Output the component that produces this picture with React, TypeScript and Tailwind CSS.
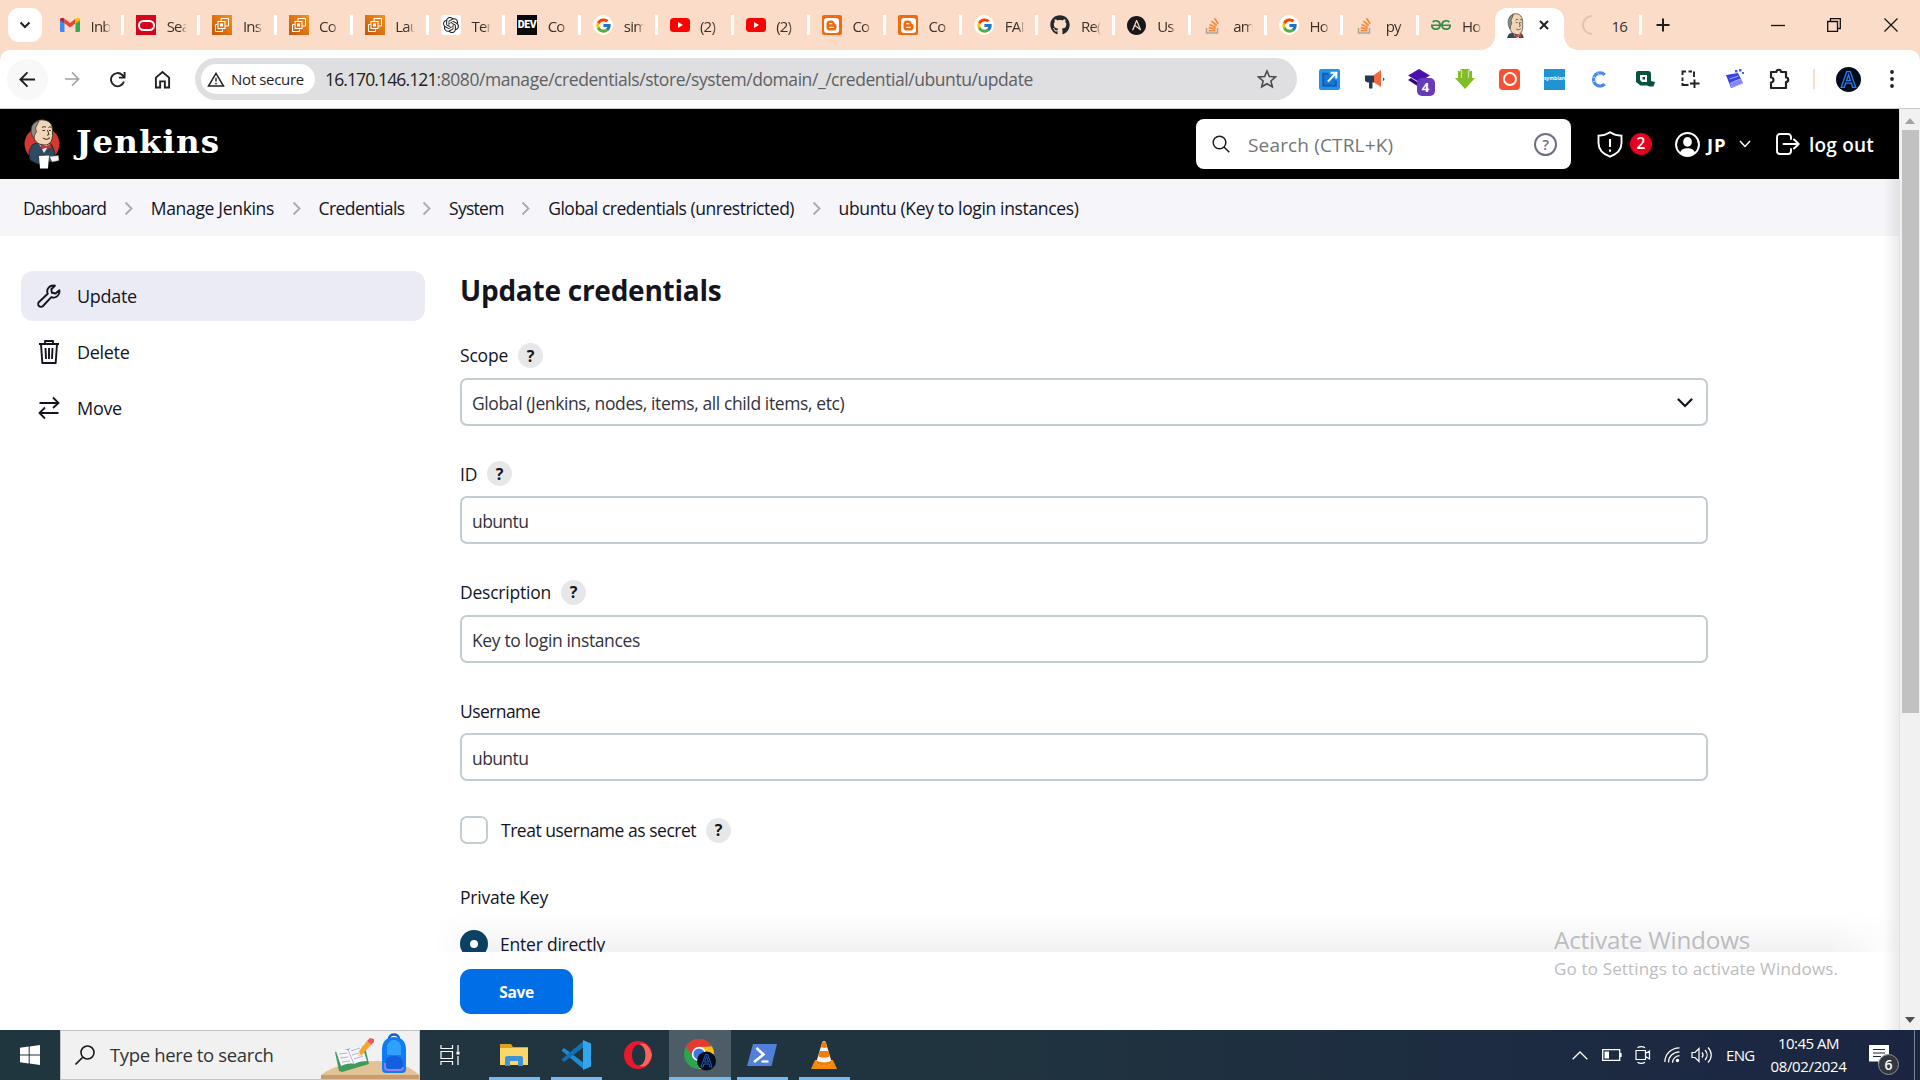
import React, { ReactNode } from 'react';
import { FcGoogle } from 'react-icons/fc';
import { FaGithub } from 'react-icons/fa';
import { SiAnsible, SiBlogger, SiGeeksforgeeks, SiOpenai } from 'react-icons/si';

/* ---------- favicons ---------- */
const Gmail = () => (
  <svg viewBox="0 0 20 20" className="size-5">
    <path d="M0 5v10.500C0 16.500.6 17 1.400 17H4.500V8.200L0 4.600z" fill="#4285f4" />
    <path d="M20 5v10.500c0 1-.6 1.500-1.400 1.500H15.500V8.200L20 4.600z" fill="#34a853" />
    <path d="M4.500 8.200V3.800L10 8l5.500-4.200v4.400L10 12.500z" fill="#ea4335" />
    <path d="M0 4.900C0 2.900 2.200 2 3.700 3.200l.8.600v4.600L0 5.300z" fill="#c5221f" />
    <path d="M20 4.900c0-2-2.200-2.900-3.700-1.700l-.8.600v4.600L20 5.300z" fill="#fbbc04" />
  </svg>
);
const Oracle = () => (
  <span className="flex size-5 items-center justify-center bg-[#d3061c]">
    <span className="h-[11px] w-[17px] rounded-full border-[2.500px] border-white" />
  </span>
);
const Aws = () => (
  <svg viewBox="0 0 20 20" className="size-5">
    <defs>
      <linearGradient id="awsg" x1="0" y1="1" x2="1" y2="0">
        <stop offset="0" stopColor="#c2560f" />
        <stop offset="1" stopColor="#f59417" />
      </linearGradient>
    </defs>
    <rect width="20" height="20" fill="url(#awsg)" />
    <g fill="none" stroke="#fff" strokeWidth="1">
      <path d="M5.500 9.500H3.500v7H10.500V14.500" />
      <rect x="6" y="6.500" width="7" height="7" />
      <path d="M9 6.500V3.500h7.500V11H13" />
      <rect x="8.500" y="9" width="2" height="2" />
    </g>
  </svg>
);
const Gpt = () => (
  <span className="flex size-5 items-center justify-center rounded-[3px] bg-white">
    <SiOpenai className="size-[16px] text-[#222]" />
  </span>
);
const Dev = () => (
  <span className="flex size-5 items-center justify-center bg-[#0a0a0a] font-['Roboto'] text-[10.500px] leading-none font-black tracking-[-0.3px] text-white">
    DEV
  </span>
);
const Google = () => (
  <span className="flex size-5 items-center justify-center rounded-full bg-white">
    <FcGoogle className="size-[17px]" />
  </span>
);
const Youtube = () => (
  <svg viewBox="0 0 20 20" className="size-5">
    <rect y="3" width="20" height="14" rx="3.500" fill="#f00" />
    <path d="M8 7v6l5-3z" fill="#fff" />
  </svg>
);
const Blogger = () => (
  <span className="flex size-5 items-center justify-center rounded-[2px] bg-[#f06a0f]">
    <SiBlogger className="size-[15px] rounded-[3px] text-white" />
  </span>
);
const Github = () => <FaGithub className="size-5 text-[#24292e]" />;
const Ansible = () => <SiAnsible className="size-[19px] text-[#15191c]" />;
const Stack = () => (
  <svg viewBox="0 0 20 20" className="size-5">
    <path d="M3.500 13v5h11v-5" fill="none" stroke="#a9a5a0" strokeWidth="1.500" />
    <path d="M5.500 15.600h7M5.700 12.700l6.800 1.100M6.500 9.500l6.300 2.700M8.500 6.200l5.200 4.300M11.500 3.200l3.700 5.500" stroke="#f08a3c" strokeWidth="1.700" />
  </svg>
);
const Gfg = () => <SiGeeksforgeeks className="size-[20px] text-[#2f8d46]" />;

const Butler = ({ className, bust }: { className: string; bust?: boolean }) => (
  <svg viewBox={bust ? '4 0 28 30' : '0 0 36 50'} preserveAspectRatio={bust ? 'none' : undefined} className={className}>
    {!bust && <ellipse cx="18" cy="25" rx="17.500" ry="17" fill="#d33833" />}
    <path d="M8 26c4-3 16-3 20 0l3 8-2 8-15 3-8-4-1-9z" fill="#2f4a60" stroke="#182733" strokeWidth=".8" />
    <path d="M15 25l5 9 6-9z" fill="#e8e4e0" />
    <path d="M9 9c0-6 5-9 11-8 7 1 9 6 8.500 13 .5 7-2 12-8 12C13 26 10 21 9.500 17z" fill="#f0d6b7" stroke="#3a2a1e" strokeWidth=".9" />
    <path d="M15 2C9 3 6 8 7.500 14.500c.5 2 1.500 3.500 2.500 4.500l1-4 1.500-2-1-4z" fill="#8f8c85" stroke="#35302c" strokeWidth=".7" />
    <path d="M18 8.500c1.500-1 3-1 4-.2M24.500 8.500c1-.8 2-.8 3 0M18.500 11.500h2.500M25 11.500h1.800M23.500 11l1.500 4.500-2 .8" fill="none" stroke="#332" strokeWidth="1" />
    <path d="M19 19c2 1.500 5 1.500 7-.5" fill="none" stroke="#6d4c41" strokeWidth="1.200" />
    <path d="M17 25l5 2.500 5-2.500v5l-5-1.700-5 2.200z" fill="#d33833" stroke="#7a1512" strokeWidth=".5" />
    {!bust && (
      <>
        <path d="M15 37l10-.5-1 13H16z" fill="#fff" />
        <path d="M25.500 37.500l9-1 .5 5-7 1.500z" fill="#f7f5f2" stroke="#666" strokeWidth=".5" />
      </>
    )}
  </svg>
);

const tabs: [() => ReactNode, string][] = [
  [Gmail, 'Inb'],
  [Oracle, 'Sea'],
  [Aws, 'Ins'],
  [Aws, 'Co'],
  [Aws, 'Lau'],
  [Gpt, 'Ter'],
  [Dev, 'Co'],
  [Google, 'sim'],
  [Youtube, '(2)'],
  [Youtube, '(2)'],
  [Blogger, 'Co'],
  [Blogger, 'Co'],
  [Google, 'FAI'],
  [Github, 'Re('],
  [Ansible, 'Us'],
  [Stack, 'am'],
  [Google, 'Ho'],
  [Stack, 'py'],
  [Gfg, 'Ho'],
];

function TabStrip() {
  return (
    <div className="flex h-[50px] shrink-0 bg-[#fbdcc9]">
      <div className="flex w-[47px] shrink-0 items-center pl-2">
        <div className="flex h-[34px] w-[34px] items-center justify-center rounded-[11px] bg-white">
          <svg viewBox="0 0 12 8" className="h-[8px] w-[12px]">
            <path d="M1.500 1.500L6 6l4.500-4.500" fill="none" stroke="#222" strokeWidth="2" />
          </svg>
        </div>
      </div>
      {tabs.map(([Icon, label], i) => (
        <div key={i} className="flex w-[76.200px] shrink-0 items-center pl-[13px]">
          <span className="flex w-5 shrink-0 justify-center">
            <Icon />
          </span>
          <span className="ml-[10.500px] w-[20px] overflow-hidden [mask-image:linear-gradient(90deg,#000_65%,transparent)] pt-[2px] text-[15px] tracking-[-0.8px] whitespace-nowrap text-[#3b3029]">
            {label}
          </span>
          {i < tabs.length - 1 && <span className="mr-[-1px] ml-auto h-5 w-[3px] bg-white" />}
        </div>
      ))}
      <div className="relative mt-2 flex w-[69px] shrink-0 items-center rounded-t-[12px] bg-white pb-2 pl-[11px]">
        <span className="absolute bottom-0 left-[-14px] size-[14px] bg-[radial-gradient(circle_at_0_0,transparent_13.500px,white_14px)]" />
        <span className="absolute right-[-14px] bottom-0 size-[14px] bg-[radial-gradient(circle_at_100%_0,transparent_13.500px,white_14px)]" />
        <Butler bust className="h-[25px] w-[19px]" />
        <svg viewBox="0 0 10 10" className="ml-[14px] size-[10px]">
          <path d="M1 1l8 8M9 1L1 9" stroke="#222" strokeWidth="2" />
        </svg>
      </div>
      <div className="flex w-[78px] shrink-0 items-center pl-[18px]">
        <svg viewBox="0 0 20 20" className="size-5">
          <path d="M10 1a9 9 0 0 0 0 18" fill="none" stroke="#dcc4b6" strokeWidth="2" />
        </svg>
        <span className="ml-[10px] pt-[2px] text-[15px] tracking-[-0.8px] text-[#3b3029]">16</span>
        <span className="ml-auto h-5 w-[3px] bg-white" />
      </div>
      <div className="flex grow items-center pl-[14px]">
        <svg viewBox="0 0 14 14" className="size-[14px]">
          <path d="M7 .5v13M.5 7h13" stroke="#1d1d1d" strokeWidth="2" />
        </svg>
        <svg viewBox="0 0 14 14" className="ml-auto size-[14px]">
          <path d="M0 7.500h14" stroke="#111" strokeWidth="1.300" />
        </svg>
        <svg viewBox="0 0 14 14" className="ml-[42px] size-[14px]">
          <path d="M.7 3.500h9.800v9.800H.7zM3.500 3.500V.7h9.800v9.800h-2.800" fill="none" stroke="#111" strokeWidth="1.300" />
        </svg>
        <svg viewBox="0 0 14 14" className="mr-[22px] ml-[43px] size-[14px]">
          <path d="M.5.5l13 13M13.500.5l-13 13" stroke="#111" strokeWidth="1.200" />
        </svg>
      </div>
    </div>
  );
}

const Cell = ({ children }: { children: ReactNode }) => (
  <span className="flex w-[45px] shrink-0 items-center justify-center">{children}</span>
);

const LetterBadge = ({ className }: { className: string }) => (
  <svg viewBox="0 0 24 24" className={className}>
    <circle cx="12" cy="12" r="12" fill="#030b1c" />
    <path d="M5 19.500L10.300 4.500h3.400l5.300 15h-3l-1.300-4H9.300l-1.300 4zM10.200 13h3.600L12 7.500z" fill="#04102a" stroke="#2a80f0" strokeWidth="1.200" />
  </svg>
);

function Toolbar() {
  return (
    <div className="bg-[#fbdcc9]">
      <div className="flex h-[59px] items-center rounded-t-[10px] border-b border-[#c9c9c9] bg-white">
        <span className="ml-[7px] flex size-[41px] items-center justify-center rounded-full bg-[#f8f8f8]">
          <svg viewBox="0 0 18 18" className="size-[17px]">
            <path d="M17 9H2M9 1.500L1.500 9 9 16.500" fill="none" stroke="#1f1f1f" strokeWidth="2" />
          </svg>
        </span>
        <span className="flex w-12 justify-center">
          <svg viewBox="0 0 18 18" className="size-[16px]">
            <path d="M1 9h15M9 1.500L16.500 9 9 16.500" fill="none" stroke="#a3a3a3" strokeWidth="1.800" />
          </svg>
        </span>
        <span className="flex w-[43px] justify-center">
          <svg viewBox="0 0 18 18" className="size-[17px]">
            <path d="M15.800 11.200A7 7 0 1 1 14 4.200L16 6.500M16.500 1v6h-6" fill="none" stroke="#222" strokeWidth="2" />
          </svg>
        </span>
        <span className="flex w-[47px] justify-center">
          <svg viewBox="0 0 18 20" className="h-[19px] w-[17px]">
            <path d="M2 8L9 2l7 6v10.500h-4.500V12h-5v6.500H2z" fill="none" stroke="#222" strokeWidth="2" />
          </svg>
        </span>
        <div className="ml-[9px] flex h-[42px] w-[1102px] items-center rounded-full bg-[#dfdfe1] pl-[6px]">
          <div className="flex h-[30px] w-[114px] items-center rounded-full bg-white pl-[6px]">
            <svg viewBox="0 0 18 16" className="h-[15px] w-[18px]">
              <path d="M9 1.500L17 15H1z" fill="none" stroke="#222" strokeWidth="1.600" />
              <path d="M9 6.200v4M9 11.400v1.800" stroke="#222" strokeWidth="1.500" />
            </svg>
            <span className="ml-[6px] text-[15px] font-medium tracking-[-0.33px] whitespace-nowrap text-[#1f1f1f]">Not secure</span>
          </div>
          <div className="ml-[10px] pt-px text-[17.500px] whitespace-nowrap">
            <span className="tracking-[-0.88px] text-[#222]">16.170.146.121</span>
            <span className="tracking-[-0.43px] text-[#5f6063]">:8080/manage/credentials/store/system/domain/_/credential/ubuntu/update</span>
          </div>
          <svg viewBox="0 0 20 20" className="mr-[20px] ml-auto size-[20px]">
            <path d="M10 2l2.400 5.500 6 .5-4.500 4 1.400 5.800L10 14.700l-5.300 3.100 1.400-5.800-4.500-4 6-.5z" fill="none" stroke="#4a4a4a" strokeWidth="1.600" />
          </svg>
        </div>
        <div className="ml-[10px] flex">
          <Cell>
            <svg viewBox="0 0 20 20" className="size-[21px]">
              <rect width="20" height="20" rx="2" fill="#2490ea" />
              <path d="M9 4.500H4v11.500h12v-5" fill="#1976d2" stroke="#0f5fb8" strokeWidth="2" />
              <path d="M11 3.500h5.500V9M16 4l-7.500 8" fill="none" stroke="#fff" strokeWidth="2" />
            </svg>
          </Cell>
          <Cell>
            <svg viewBox="0 0 20 20" className="size-5">
              <path d="M0 6.500h9v7H7.500v6H4v-6H2.500L0 12z" fill="#243b53" />
              <path d="M9 6l7-5v17l-7-4.500z" fill="#f4693b" />
              <path d="M18 8.500c2 .5 2 3 0 3.500z" fill="#344e66" />
            </svg>
          </Cell>
          <Cell>
            <span className="relative size-6">
              <svg viewBox="0 0 24 24" className="size-6">
                <path d="M11 2l11 6.500-11 6.500L0 8.500z" fill="#4b0fae" />
                <path d="M0 13l3-2 8 5 8-5 3 2-11 7z" fill="#32077e" />
              </svg>
              <span className="absolute top-[11px] left-[9px] flex h-[18px] w-[18px] items-center justify-center rounded-[5px] bg-[#673ab7] text-[13px] leading-none font-bold text-white">
                4
              </span>
            </span>
          </Cell>
          <Cell>
            <svg viewBox="0 0 20 20" className="size-5">
              <path d="M3 1.500l2.500 1V0h9v2.500l2.500-1V9h3L10 20 0 9h3z" fill="#82bd28" />
              <path d="M6.500 1v8M13.500 1v8" stroke="#c7e592" strokeWidth="1.200" />
            </svg>
          </Cell>
          <Cell>
            <span className="flex size-[21px] items-center justify-center rounded-[4px] bg-[#f9502f]">
              <span className="size-[14px] rounded-full border-[2.500px] border-white" />
            </span>
          </Cell>
          <Cell>
            <span className="flex size-[21px] items-center justify-center bg-[#1f93d3] text-[5px] font-bold text-white">symbian</span>
          </Cell>
          <Cell>
            <svg viewBox="0 0 18 18" className="size-[17px]">
              <path d="M14.500 4a7 7 0 1 0 0 10" fill="none" stroke="#4d86f0" strokeWidth="3.300" />
              <path d="M2 6.500l4 1M2 11.500l4-1M7 1.500l1.500 4" stroke="#b5d0fb" strokeWidth="1" />
            </svg>
          </Cell>
          <Cell>
            <svg viewBox="0 0 20 18" className="h-[18px] w-5">
              <path d="M3 1h10q3 0 3 3v7l4 1-1.500 4.500h-4L12 15.500H5.500L1 12V3q0-2 2-2z" fill="#06513f" />
              <path d="M5 5h7v7H7L5 10z" fill="#fff" />
              <path d="M7.500 7h2.500v2.500H7.500z" fill="#06513f" />
            </svg>
          </Cell>
          <Cell>
            <svg viewBox="0 0 20 20" className="size-5">
              <path d="M2.500 6V2.500H6M8.500 2.500h3.500M14 2.500V8M2.500 8.500v3.500M2.500 14v2H8.500M14.500 10.500v8.500M10 14.500h9.500" fill="none" stroke="#222" strokeWidth="1.900" />
            </svg>
          </Cell>
          <Cell>
            <svg viewBox="0 0 20 20" className="size-5">
              <path d="M1 6l12-2 5 10-12 5z" fill="#3443e8" />
              <path d="M4.500 10l9-3M5.500 14l9.500-4 3 4-11 4.500z" stroke="#a9a9ff" fill="#7f86fa" />
              <path d="M10 1h2.500v2.500H10zM14 0h2.500v2.500H14zM17 3h2v2h-2z" fill="#4b57f4" />
            </svg>
          </Cell>
          <Cell>
            <svg viewBox="0 0 22 22" className="size-[22px]">
              <path d="M2 4h5.500a2 2 0 0 1 4.500 0h5V9.500a2 2 0 0 1 0 4.500V20H2v-5.500a2.500 2.500 0 0 0 0-5z" fill="none" stroke="#222" strokeWidth="2.200" strokeLinejoin="round" />
            </svg>
          </Cell>
        </div>
        <span className="ml-[11px] h-5 w-[2px] bg-[#fbdcc9]" />
        <LetterBadge className="ml-[21px] size-[25px]" />
        <svg viewBox="0 0 4 18" className="ml-[29px] h-[18px] w-1">
          <circle cx="2" cy="2" r="1.900" fill="#222" />
          <circle cx="2" cy="9" r="1.900" fill="#222" />
          <circle cx="2" cy="16" r="1.900" fill="#222" />
        </svg>
      </div>
    </div>
  );
}

/* ---------- Jenkins ---------- */
function JenkinsHeader() {
  return (
    <header className="flex h-[70px] shrink-0 items-center bg-black text-white">
      <Butler className="ml-6 h-[50px] w-[36px]" />
      <span className="ml-[16px] pb-[3px] font-['DejaVu_Serif'] text-[32.500px] leading-none font-bold tracking-[1.1px]">Jenkins</span>
      <div className="ml-auto flex h-[50px] w-[375px] items-center rounded-[8px] bg-white">
        <svg viewBox="0 0 18 18" className="ml-4 size-[18px]">
          <circle cx="7.500" cy="7.500" r="6.300" fill="none" stroke="#1c1c24" strokeWidth="1.500" />
          <path d="M12 12l5.300 5.300" stroke="#1c1c24" strokeWidth="1.500" />
        </svg>
        <span className="ml-[18px] pt-[2px] text-[19px] tracking-[0.15px] text-[#757575]">Search (CTRL+K)</span>
        <span className="mr-[14px] ml-auto flex size-[23px] items-center justify-center rounded-full border-2 border-[#6e6e85] text-[15px] leading-none font-semibold text-[#6e6e85]">
          ?
        </span>
      </div>
      <svg viewBox="0 0 26 27" className="ml-[26px] h-[27px] w-[26px]">
        <path d="M13 1.200C9.500 3.500 5.500 4.600 1.500 4.700V12c0 7 4.500 11 11.500 13.700C20 23 24.500 19 24.500 12V4.700C20.500 4.600 16.500 3.500 13 1.200z" fill="none" stroke="#fff" strokeWidth="1.900" />
        <path d="M13 8v8M13 18.500v2.300" stroke="#fff" strokeWidth="2.100" />
      </svg>
      <span className="ml-[7px] flex size-[22px] items-center justify-center rounded-full bg-[#e6001f] text-[15.500px] leading-none font-semibold">2</span>
      <svg viewBox="0 0 24 24" className="ml-[23px] size-[25px]">
        <circle cx="12" cy="12" r="11" fill="none" stroke="#fff" strokeWidth="1.900" />
        <ellipse cx="12" cy="9.500" rx="4.200" ry="4.700" fill="#fff" />
        <path d="M4.500 20c1.500-3.500 4-4.500 7.500-4.500s6 1 7.500 4.500c-4.500 4-10.500 4-15 0z" fill="#fff" />
      </svg>
      <span className="ml-[7px] w-[21px] pt-[2px] text-[18.500px] font-bold tracking-[0.9px]">JP</span>
      <svg viewBox="0 0 12 8" className="ml-[11px] h-[8px] w-3">
        <path d="M1 1l5 5.500L11 1" fill="none" stroke="#fff" strokeWidth="1.500" />
      </svg>
      <svg viewBox="0 0 24 22" className="ml-[25px] h-[22px] w-6">
        <path d="M15 6V4a3 3 0 0 0-3-3H4a3 3 0 0 0-3 3v14a3 3 0 0 0 3 3h8a3 3 0 0 0 3-3v-2M7.500 11H22.500M18 6.500l4.700 4.500-4.700 4.500" fill="none" stroke="#fff" strokeWidth="1.900" strokeLinecap="round" strokeLinejoin="round" />
      </svg>
      <span className="mr-[25px] ml-[9px] pt-[2px] text-[19px] font-semibold tracking-[0.2px]">log out</span>
    </header>
  );
}

const Sep = () => (
  <span className="flex w-[44.500px] shrink-0 justify-center">
    <svg viewBox="0 0 9 15" className="h-[15px] w-[9px]">
      <path d="M1.500 1.500l6 6-6 6" fill="none" stroke="#a9a9b3" strokeWidth="1.800" />
    </svg>
  </span>
);

function Breadcrumbs() {
  return (
    <nav className="flex h-[57px] shrink-0 items-center bg-[#f5f5fa] pt-[2px] pl-[23px] text-[17.500px] font-medium whitespace-nowrap text-[#14141f]">
      <span className="tracking-[-0.78px]">Dashboard</span>
      <Sep />
      <span className="tracking-[-0.32px]">Manage Jenkins</span>
      <Sep />
      <span className="tracking-[-0.58px]">Credentials</span>
      <Sep />
      <span className="tracking-[-0.74px]">System</span>
      <Sep />
      <span className="tracking-[-0.47px]">Global credentials (unrestricted)</span>
      <Sep />
      <span className="tracking-[-0.35px]">ubuntu (Key to login instances)</span>
    </nav>
  );
}

function Sidebar() {
  return (
    <aside className="ml-[21px] w-[404px] shrink-0 pt-[35px] text-[18px] font-medium tracking-[-0.3px] text-[#14141f]">
      <div className="flex h-[50px] items-center rounded-[12px] bg-[#ebebf5] pl-4">
        <svg viewBox="0 0 24 24" className="size-6">
          <path d="M22.300 6.300a6 6 0 0 1-8 6.900L6 22a2.700 2.700 0 0 1-4-4l8.700-8.300a6 6 0 0 1 7.200-8L14.300 5.200l.6 3.600 3.700.7z" fill="none" stroke="#14141f" strokeWidth="1.900" strokeLinejoin="round" />
        </svg>
        <span className="ml-[16px]">Update</span>
      </div>
      <div className="mt-[6px] flex h-[50px] items-center pl-4">
        <svg viewBox="0 0 24 26" className="h-[26px] w-6">
          <path d="M2 5h20M8 5V2h8v3M4 5l1.300 19h13.400L20 5M8.500 9l.5 11M12 9v11M15.500 9l-.5 11" fill="none" stroke="#14141f" strokeWidth="1.900" strokeLinejoin="round" />
        </svg>
        <span className="ml-[16px]">Delete</span>
      </div>
      <div className="mt-[6px] flex h-[50px] items-center pl-4">
        <svg viewBox="0 0 24 24" className="size-6">
          <path d="M2.500 7h19M16 1.500L21.500 7 16 12M21.500 17h-19M8 11.500L2.500 17 8 22.500" fill="none" stroke="#14141f" strokeWidth="1.800" />
        </svg>
        <span className="ml-[16px]">Move</span>
      </div>
    </aside>
  );
}

const Help = () => (
  <span className="ml-[10px] flex size-[25px] items-center justify-center rounded-full bg-[#e7e7ea] text-[16px] leading-none font-bold tracking-normal">?</span>
);

const Field = ({ label, help, children }: { label: ReactNode; help?: boolean; children: ReactNode }) => (
  <div className="mb-[35.400px]">
    <div className="mb-[10px] flex h-[25px] items-center font-medium">
      {label}
      {help && <Help />}
    </div>
    <div className="flex h-[48px] items-center rounded-[7px] border-2 border-[#c3ccd1] bg-white pt-[2px] pr-[13px] pl-[10px] text-[#33333d]">
      {children}
    </div>
  </div>
);

function Form() {
  return (
    <main className="ml-[35px] w-[1248px] shrink-0 pt-[33px] text-[17.500px] whitespace-nowrap text-[#14141f]">
      <h1 className="mb-[35px] h-[39px] text-[28px] leading-[42px] font-bold tracking-[-0.25px]">Update credentials</h1>
      <Field help label={<span className="tracking-[-0.2px]">Scope</span>}>
        <span className="tracking-[-0.39px]">Global (Jenkins, nodes, items, all child items, etc)</span>
        <svg viewBox="0 0 16 10" className="ml-auto h-[10px] w-4">
          <path d="M1.500 1.500L8 8l6.500-6.500" fill="none" stroke="#14141f" strokeWidth="2.200" strokeLinecap="round" />
        </svg>
      </Field>
      <Field help label={<span className="tracking-[-0.2px]">ID</span>}>
        <span className="tracking-[-0.6px]">ubuntu</span>
      </Field>
      <Field help label={<span className="tracking-[-0.22px]">Description</span>}>
        <span className="tracking-[-0.37px]">Key to login instances</span>
      </Field>
      <Field label={<span className="tracking-[-0.57px]">Username</span>}>
        <span className="tracking-[-0.6px]">ubuntu</span>
      </Field>
      <div className="flex h-[27px] items-center font-medium">
        <span className="size-[28px] rounded-[7px] border-2 border-[#c3ccd1] bg-white" />
        <span className="ml-[13px] pt-px tracking-[-0.48px]">Treat username as secret</span>
        <Help />
      </div>
      <div className="mt-[41px] flex h-[25px] items-center font-medium tracking-[-0.23px]">Private Key</div>
      <div className="mt-[20px] flex h-[28px] items-center font-medium">
        <span className="flex size-[28px] items-center justify-center rounded-full bg-[#0b4264]">
          <span className="size-[8px] rounded-full bg-white" />
        </span>
        <span className="ml-3 pt-px tracking-[-0.22px]">Enter directly</span>
      </div>
    </main>
  );
}

function Page() {
  return (
    <div className="flex h-[921px]">
      <div className="relative flex w-[1899px] flex-col overflow-hidden bg-white">
        <JenkinsHeader />
        <Breadcrumbs />
        <div className="flex min-h-0 grow overflow-hidden">
          <Sidebar />
          <Form />
        </div>
        <div className="absolute right-0 bottom-[78px] left-[435px] h-[40px] bg-gradient-to-b from-transparent to-[#282850]/6 [mask-image:linear-gradient(90deg,transparent,#000_50px,#000_calc(100%-70px),transparent)]" />
        <div className="absolute right-0 bottom-0 left-[460px] h-[78px] bg-white pt-[17px]">
          <button className="flex h-[45px] w-[113px] items-center justify-center rounded-[11px] bg-[#006ee6] pt-[2px] text-[15.500px] font-bold tracking-[-0.3px] text-white">Save</button>
        </div>
        <div className="absolute bottom-[47px] left-[1554px] w-[300px] whitespace-nowrap text-[#bcbcbe]">
          <div className="text-[24.300px] leading-[30px] tracking-[-0.2px]">Activate Windows</div>
          <div className="text-[17px] leading-[28px] tracking-[0.16px]">Go to Settings to activate Windows.</div>
        </div>
        <div className="absolute top-[70px] right-0 bottom-0 w-[16px] bg-gradient-to-r from-transparent to-black/8" />
      </div>
      <div className="flex w-[21px] flex-col items-center border-l border-[#e2e2e2] bg-[#f1f1f1]">
        <svg viewBox="0 0 10 6" className="mt-[9px] h-[6px] w-[10px]">
          <path d="M0 6l5-6 5 6z" fill="#a3a3a3" />
        </svg>
        <span className="mt-[6px] h-[583px] w-[17px] bg-[#c1c1c1]" />
        <svg viewBox="0 0 10 6" className="mt-auto mb-[7px] h-[6px] w-[10px]">
          <path d="M0 0l5 6 5-6z" fill="#505050" />
        </svg>
      </div>
    </div>
  );
}

/* ---------- Windows taskbar ---------- */
const Task = ({ children, open, active }: { children: ReactNode; open?: boolean; active?: boolean }) => (
  <span className={active ? 'flex w-[62px] shrink-0 flex-col items-center bg-[#4c5d67]' : 'flex w-[62px] shrink-0 flex-col items-center'}>
    <span className="flex h-[47px] items-center pt-[3px]">{children}</span>
    {open && <span className={active ? 'h-[3px] w-full bg-[#76b9ed]' : 'h-[3px] w-[51px] bg-[#76b9ed]'} />}
  </span>
);

function Taskbar() {
  return (
    <div className="flex h-[50px] shrink-0 bg-gradient-to-r from-[#20363f] via-[#20343f] to-[#1b2542] text-white">
      <span className="flex w-[60px] shrink-0 items-center justify-center">
        <svg viewBox="0 0 20 20" className="size-5" fill="#fff">
          <path d="M0 2.800l8.700-1.200v8H0zM9.700 1.400L20 0v9.600H9.700zM0 10.500h8.700v8L0 17.200zM9.700 10.500H20V20L9.700 18.600z" />
        </svg>
      </span>
      <div className="relative flex w-[360px] shrink-0 items-center border border-[#c4c4c4] bg-[#f1f1f1]">
        <svg viewBox="0 0 20 20" className="ml-[14px] size-5">
          <circle cx="12.500" cy="7.500" r="6.500" fill="none" stroke="#1a1a1a" strokeWidth="1.600" />
          <path d="M8 12L.5 19.500" stroke="#1a1a1a" strokeWidth="1.600" />
        </svg>
        <span className="ml-[15px] text-[18.500px] tracking-[-0.36px] whitespace-nowrap text-[#333]">Type here to search</span>
        <svg viewBox="0 0 98 48" className="absolute right-0 bottom-0 h-12 w-[98px]">
          <path d="M0 44C14 33 34 30 56 30c20 0 34 6 42 14v4H0z" fill="#e3c296" />
          <path d="M0 44h98v4H0z" fill="#c99c70" />
          <path d="M14 21l4 19 3 1 27-8-4-17-4-1z" fill="#3f9a5b" />
          <path d="M15 20c4-2 9-2 12-1 4-3 9-4 14-4l5 15c-5 0-9 1-13 3-4-1-9 0-13 2z" fill="#f7f4fb" />
          <path d="M27 19l6 14M18 23l8-1M19 27l8-1M21 31l8-1M30 20l9-3M31 24l10-3M33 28l9-3" stroke="#b9b3d6" strokeWidth="1" />
          <path d="M38 20l2 5 10-11-4-4z" fill="#f7a531" />
          <path d="M46 10l3-3 4 1v3l-3 3z" fill="#ee5a55" />
          <path d="M38 20l-1 5 3 0z" fill="#f6d7a7" />
          <g transform="translate(1 1)">
            <path d="M67 7c0-6 10-6 10 0" fill="none" stroke="#0a5fd0" strokeWidth="2.500" />
            <path d="M60 18C60 8 66 5 72 5s12 3 12 13v19c0 3-2 4-4 4H64c-2 0-4-1-4-4z" fill="#0f7cf0" />
            <path d="M65 14c1-4 4-6 7-6s6 2 7 6v9H65z" fill="#2fa0ff" />
            <path d="M63 32c0-6 4-8 9-8s9 2 9 8v4c0 2-1 2-3 2H66c-2 0-3 0-3-2z" fill="#1260de" />
            <path d="M63 31v4c0 2 1 3 3 3h12c2 0 3-1 3-3" fill="none" stroke="#9a7df2" strokeWidth="1.800" />
          </g>
        </svg>
      </div>
      <span className="flex w-[63px] shrink-0 items-center justify-center">
        <svg viewBox="0 0 20 20" className="mr-[3px] size-5">
          <path d="M1 0v3.500h11.500V0M1 20v-3.500h11.500V20M1 6.500h11.500v7H1zM18 0v6M18 11v9" fill="none" stroke="#fff" strokeWidth="1.200" />
          <path d="M16.500 6.500h3v3h-3z" fill="#fff" />
        </svg>
      </span>
      <Task open>
        <svg viewBox="0 0 28 24" className="h-6 w-7">
          <path d="M0 1h11l2 3h15v18H0z" fill="#d9a520" />
          <path d="M0 5h28v17H0z" fill="#fbd668" />
          <path d="M5 23v-8c0-1 1-2 2-2h14c1 0 2 1 2 2v8h-5v-5h-8v5z" fill="#3d93d6" />
        </svg>
      </Task>
      <Task open>
        <svg viewBox="0 0 30 30" className="size-[30px]">
          <path d="M.5 10.500L3 8l20 15v6.500z" fill="#1e8ad2" />
          <path d="M.5 19.500L3 22l20-15V.5z" fill="#1070b3" />
          <path d="M22 0l8 3.500v23L22 30z" fill="#2fa7ef" />
        </svg>
      </Task>
      <Task>
        <svg viewBox="0 0 28 28" className="size-7">
          <path fillRule="evenodd" d="M14 0a14 14 0 1 0 0 28 14 14 0 0 0 0-28zm1 3.500c3.800 0 6.500 4.500 6.500 10.500s-2.700 10.500-6.500 10.500S8 20 8 14 11.200 3.500 15 3.500z" fill="#e8192f" />
          <path d="M15 3.500C20 0 26 5 28 14c-2 9-8 14-13 10.500 3.800 0 6.500-4.500 6.500-10.500S18.800 3.500 15 3.500z" fill="#f9645c" />
        </svg>
      </Task>
      <Task open active>
        <svg viewBox="0 0 32 32" className="size-8">
          <circle cx="15" cy="15" r="15" fill="#2da44f" />
          <path d="M2 7.500A15 15 0 0 1 28 7.500L15 8.500 9 18z" fill="#e33b2e" />
          <path d="M28 7.500A15 15 0 0 1 15 30l6.500-11.500L15 8z" fill="#fbc116" />
          <circle cx="15" cy="15" r="7.200" fill="#fff" />
          <circle cx="15" cy="15" r="5.600" fill="#3f78e0" />
          <circle cx="22.500" cy="22" r="9.500" fill="#030b1c" />
          <path d="M17 28L21.500 15.500h2.200L28 28h-2l-1-3h-5l-1 3zM20.500 23h4l-2-5.500z" fill="none" stroke="#1e5fc4" strokeWidth="1" />
        </svg>
      </Task>
      <Task open>
        <svg viewBox="0 0 30 22" className="h-[22px] w-[30px]">
          <path d="M6 0h24l-5.500 22H0z" fill="#5180d8" />
          <path d="M9.500 4l7 6.500L7 18" fill="none" stroke="#fff" strokeWidth="2.600" />
          <path d="M14.500 17.500h7" stroke="#fff" strokeWidth="2.200" />
        </svg>
      </Task>
      <Task open>
        <svg viewBox="0 0 26 28" className="h-7 w-[26px]">
          <path d="M4 19h18l4 9H0z" fill="#f58a07" />
          <path d="M13 0c1 0 1.500.5 2 2l6 20c-2 3-14 3-16 0l6-20c.5-1.500 1-2 2-2z" fill="#f8f5f2" />
          <path d="M11.300 1.500c.5-1.500 3-1.500 3.500 0L16 6c-1 1.200-5 1.200-6 0zM8.800 10h8.500l1.500 5c-2 2-9.500 2-11.500 0zM5.800 19.500c3 2.500 11.500 2.500 14.500 0L21 22c-2 3-14 3-16 0z" fill="#f07c05" />
        </svg>
      </Task>
      <div className="ml-auto flex items-center">
        <svg viewBox="0 0 16 9" className="h-[9px] w-4">
          <path d="M.7 8.300L8 1l7.300 7.300" fill="none" stroke="#fff" strokeWidth="1.300" />
        </svg>
        <svg viewBox="0 0 20 12" className="ml-[14px] h-3 w-5">
          <path d="M.7.7h17v10.600H.7zM19 4v4" fill="none" stroke="#fff" strokeWidth="1.300" />
          <path d="M2.500 2.500h4.500v7H2.500z" fill="#fff" />
        </svg>
        <svg viewBox="0 0 16 18" className="ml-[13px] h-[18px] w-4">
          <path d="M1 4.500h9.500v9H1zM10.500 7.500L14.500 5v8l-4-2.500M2.500 1.800C4.500.3 8 .3 10 1.800M2.500 16.200c2 1.500 5.500 1.500 7.500 0" fill="none" stroke="#fff" strokeWidth="1.200" />
        </svg>
        <svg viewBox="0 0 16 16" className="ml-[13px] size-4">
          <path d="M.8 15C1 7 7 1 15.500.8M4.500 15.500C4.500 9.500 9 5 15.500 4.800M8.500 15.700c0-3.700 3-6.700 7-7" fill="none" stroke="#fff" strokeWidth="1.200" />
          <circle cx="13.500" cy="13.500" r="1.700" fill="#fff" />
        </svg>
        <svg viewBox="0 0 22 18" className="ml-[11px] h-[18px] w-[22px]">
          <path d="M1 6.500h3L8 2.500v13l-4-4H1zM11 6.500c1.300 1.500 1.300 3.500 0 5M14 4c2.800 3 2.800 7 0 10M17 1.500c4.300 4.500 4.300 10.500 0 15" fill="none" stroke="#fff" strokeWidth="1.200" />
        </svg>
        <span className="ml-[13px] w-[29px] text-[15px] tracking-[-0.7px]">ENG</span>
        <div className="ml-[15px] w-[77px] text-center text-[15px] leading-[23px] whitespace-nowrap">
          <div className="tracking-[-0.5px]">10:45 AM</div>
          <div className="tracking-[-0.36px]">08/02/2024</div>
        </div>
        <div className="relative ml-[22px] size-[30px]">
          <svg viewBox="0 0 20 20" className="mt-[5px] size-5">
            <path d="M0 0h20v16.500h-7L9 20v-3.500H0z" fill="#fff" />
            <path d="M4 4.500h12M4 8h12M4 11.500h8" stroke="#1b2542" strokeWidth="1.200" />
          </svg>
          <span className="absolute top-[14px] left-[9px] flex size-[21px] items-center justify-center rounded-full border border-[#8b8f96] bg-[#33383f] text-[14px] leading-none font-semibold">6</span>
        </div>
        <span className="mr-[5px] ml-[15px] h-[50px] w-px bg-[#7d8594]" />
      </div>
    </div>
  );
}

export default function App() {
  return (
    <div className="flex h-[1080px] w-[1920px] flex-col overflow-hidden bg-white font-['Open_Sans',sans-serif]">
      <TabStrip />
      <Toolbar />
      <Page />
      <Taskbar />
    </div>
  );
}
